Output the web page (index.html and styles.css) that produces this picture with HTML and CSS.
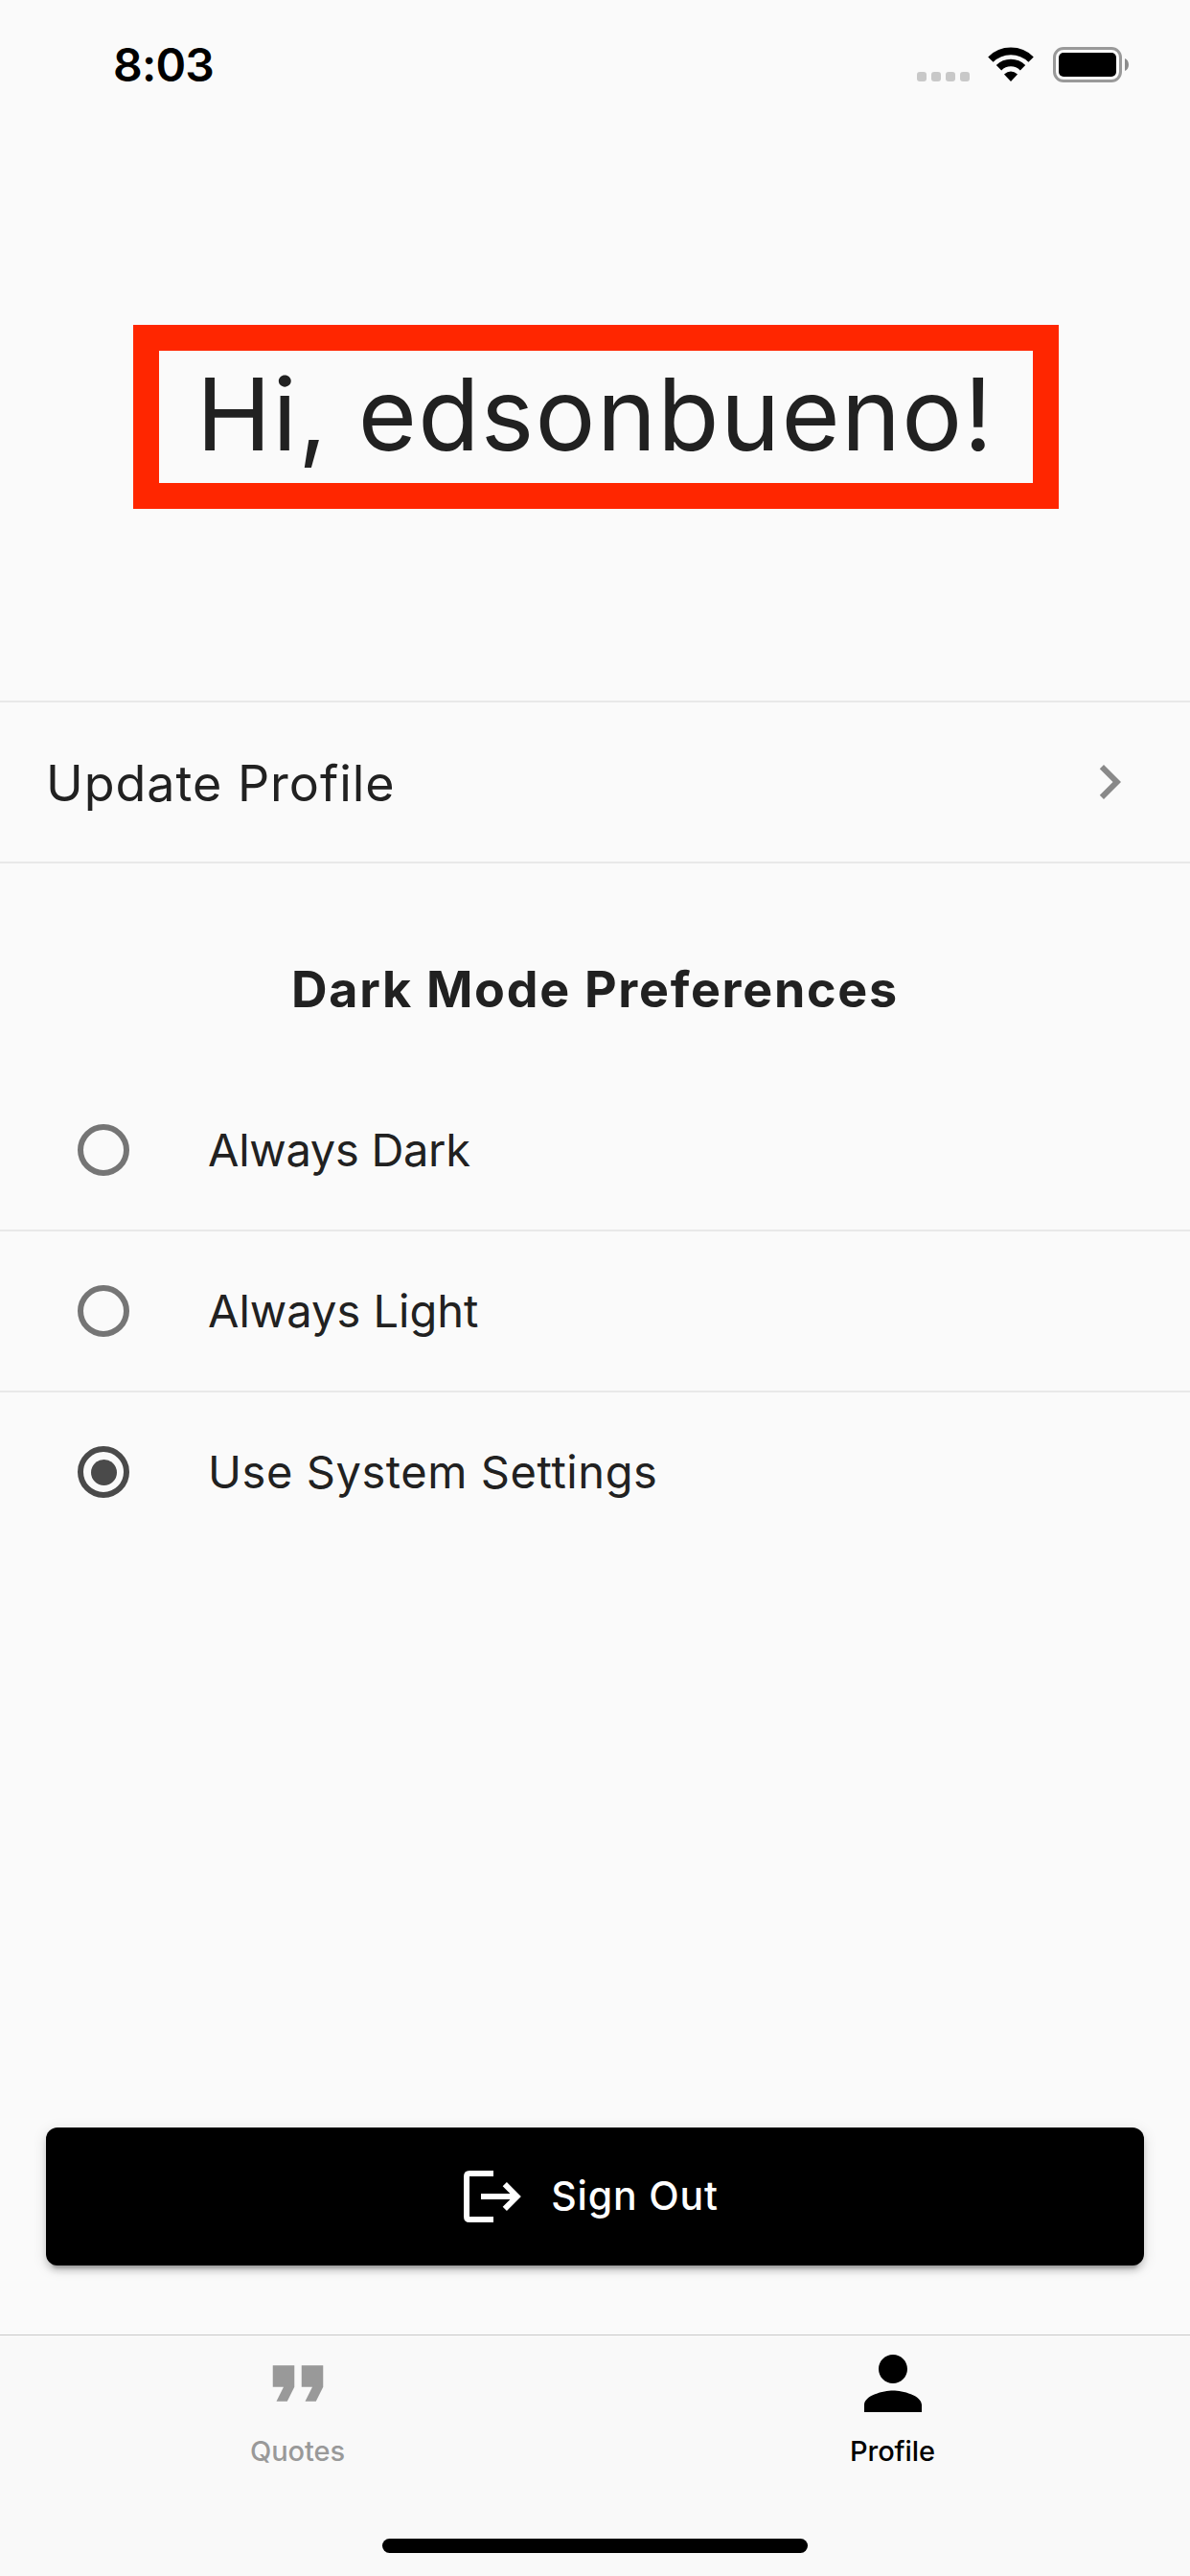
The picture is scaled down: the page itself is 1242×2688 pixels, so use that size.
FILE: index.html
```
<!DOCTYPE html>
<html lang="en">
<head>
<meta charset="utf-8">
<title>Profile</title>
<link rel="stylesheet" href="styles.css">
</head>
<body>
<div class="screen">
  <header class="status">
    <span class="time">8:03</span>
    <div class="indicators">
      <div class="signal"><i></i><i></i><i></i><i></i></div>
      <svg class="wifi" width="48" height="37" viewBox="0 0 48 37">
        <g fill="none" stroke="#000" stroke-width="7.6">
          <path d="M2.9 13.1A29.8 29.8 0 0 1 45.1 13.1"/>
          <path d="M11.5 21.7A17.6 17.6 0 0 1 36.5 21.7"/>
        </g>
        <path d="M17 28.6Q24 22.4 31 28.6L24 36z"/>
      </svg>
      <svg class="battery" width="80" height="37" viewBox="0 0 80 37">
        <rect x="1.5" y="1.5" width="69" height="34" rx="9.5" fill="none" stroke="#999" stroke-width="3"/>
        <rect x="6" y="6" width="60" height="25" rx="5"/>
        <path d="M75 12C80.300 14 80.300 23 75 25z" fill="#8c8c8c"/>
      </svg>
    </div>
  </header>

  <main class="content">
    <h1 class="greeting">Hi, edsonbueno!</h1>

    <a class="row update">
      <span>Update Profile</span>
      <svg width="72" height="72" viewBox="0 0 24 24"><path fill="#898989" d="M10 6L8.590 7.410 13.170 12l-4.580 4.590L10 18l6-6z"/></svg>
    </a>

    <h2 class="section-title">Dark Mode Preferences</h2>

    <div class="options">
      <label class="option"><span class="radio"></span><span class="label dark">Always Dark</span></label>
      <label class="option"><span class="radio"></span><span class="label">Always Light</span></label>
      <label class="option"><span class="radio selected"></span><span class="label system">Use System Settings</span></label>
    </div>

    <button class="sign-out" type="button">
      <svg width="62" height="54" viewBox="0 0 62 54" fill="none" stroke="#fff" stroke-width="6">
        <path d="M31 3H6Q3 3 3 6V48Q3 51 6 51H31"/>
        <path d="M18 27H56M42.800 14.200L55.600 27L42.800 39.800"/>
      </svg>
      <span>Sign Out</span>
    </button>
  </main>

  <nav class="tabs">
    <a class="tab quotes">
      <svg width="90" height="90" viewBox="0 0 24 24" fill="currentColor"><path d="M6 17h3l2-4V7H5v6h3zm8 0h3l2-4V7h-6v6h3z"/></svg>
      <span>Quotes</span>
    </a>
    <a class="tab active">
      <svg width="90" height="90" viewBox="0 0 24 24" fill="currentColor"><path d="M12 12c2.210 0 4-1.790 4-4s-1.790-4-4-4-4 1.790-4 4 1.790 4 4 4zm0 2c-2.670 0-8 1.340-8 4v2h16v-2c0-2.660-5.330-4-8-4z"/></svg>
      <span>Profile</span>
    </a>
  </nav>
  <div class="home"><div class="home-bar"></div></div>
</div>
</body>
</html>
```

FILE: styles.css
```
* { box-sizing: border-box; }

body {
  margin: 0;
  background: #fafafa;
  color: #212121;
  font-family: Inter, "Liberation Sans", sans-serif;
}

svg { display: block; flex: none; }

.screen {
  display: flex;
  flex-direction: column;
  width: 1242px;
  height: 2688px;
  overflow: hidden;
}

.status {
  display: flex;
  align-items: center;
  justify-content: space-between;
  height: 135px;
  padding: 0 63px 0 118px;
  color: #000;
}

.time {
  font-size: 48px;
  font-weight: 600;
  line-height: 58px;
  letter-spacing: -0.8px;
}

.indicators { display: flex; align-items: center; }

.signal {
  display: flex;
  align-self: flex-end;
  gap: 5px;
  margin: 0 19px 1px 0;
}

.signal i {
  width: 10px;
  height: 10px;
  border-radius: 3px;
  background: #c8c8c8;
}

.wifi { margin-right: 20px; }

.content {
  display: flex;
  flex-direction: column;
  flex: 1;
}

.greeting {
  width: 966px;
  height: 192px;
  margin: 204px 0 200px 139px;
  padding: 0 0 6px 39px;
  border: 27px solid #ff2600;
  font-size: 105px;
  font-weight: 400;
  line-height: 132px;
  letter-spacing: 1.35px;
  white-space: nowrap;
}

.row {
  display: flex;
  align-items: center;
  justify-content: space-between;
  height: 170px;
  padding: 0 48px;
  border: solid #e8e8e8;
  border-width: 2px 0;
}

.update {
  font-size: 52px;
  letter-spacing: 0.98px;
}

.update span { padding-top: 2px; }

.section-title {
  margin: 100px 0 52px;
  font-size: 52px;
  font-weight: 700;
  line-height: 64px;
  letter-spacing: 1.72px;
  text-align: center;
}

.option {
  display: flex;
  align-items: center;
  gap: 82px;
  height: 168px;
  padding-left: 81px;
  border-bottom: 2px solid #e8e8e8;
  font-size: 47px;
}

.option:last-child { border-bottom-color: transparent; }

.label { padding-bottom: 2px; }
.dark { letter-spacing: -0.29px; }
.system { letter-spacing: 0.58px; }

.radio {
  display: grid;
  place-items: center;
  width: 54px;
  height: 54px;
  border: 6px solid #757575;
  border-radius: 50%;
}

.selected { border-color: #4a4a4a; }

.selected::after {
  content: "";
  width: 27px;
  height: 27px;
  border-radius: 50%;
  background: #4a4a4a;
}

.sign-out {
  display: flex;
  align-items: center;
  justify-content: center;
  gap: 29px;
  height: 144px;
  margin: auto 48px 72px;
  padding: 0 8px 0 0;
  border: 0;
  border-radius: 12px;
  background: #000;
  box-shadow: 0 9px 3px -6px rgba(0, 0, 0, 0.2), 0 6px 6px rgba(0, 0, 0, 0.14), 0 3px 15px rgba(0, 0, 0, 0.12);
  color: #fff;
  font: 500 41px Inter, "Liberation Sans", sans-serif;
  letter-spacing: 0.83px;
}

.sign-out span { padding-bottom: 2px; }

.tabs {
  display: flex;
  height: 204px;
  border-top: 1px solid #c8c8c8;
  background: #f9f9f9;
}

.tab {
  display: flex;
  flex: 1;
  flex-direction: column;
  align-items: center;
  padding-top: 5px;
  color: #000;
  font-size: 29px;
  font-weight: 500;
  line-height: 36px;
  letter-spacing: -0.1px;
}

.tab span { margin-top: 8px; }

.quotes { color: #999; }

.home {
  display: flex;
  justify-content: center;
  height: 48px;
  padding-top: 9px;
  background: #f9f9f9;
}

.home-bar {
  width: 444px;
  height: 15px;
  border-radius: 8px;
  background: #000;
}
```
